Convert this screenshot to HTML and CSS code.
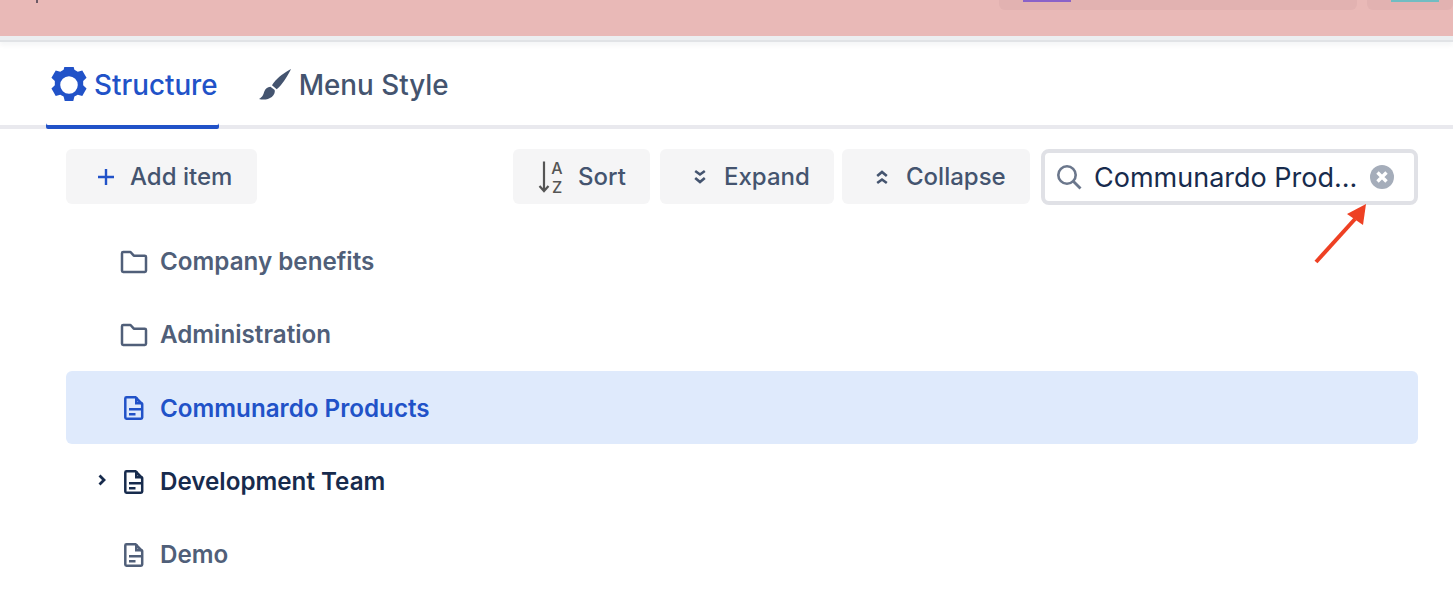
FILE: index.html
```html
<!DOCTYPE html>
<html lang="en">
  <head>
    <meta charset="UTF-8" />
    <title>Menu Editor</title>
    <link rel="stylesheet" href="styles.css">
  </head>
  <body>
    <div class="topband">
      <span class="tick"></span>
      <div class="chip"><span class="chip-bar purple"></span></div>
      <div class="chip chip-last"><span class="chip-bar teal"></span></div>
    </div>
    <div class="topshadow"></div>

    <div class="tabs">
      <div class="tab active">
        <svg class="tab-icon" viewBox="2 2 32 32" width="36" height="36">
          <path fill="#2152c8" fill-rule="evenodd" d="M14.200 0.500h7.600l1 4 3 1.700 4-1.100 3.800 6.500-3 2.900v3.800l3 2.900-3.800 6.500-4-1.100-3 1.700-1 4h-7.600l-1-4-3-1.700-4 1.100-3.800-6.500 3-2.900v-3.800l-3-2.900 3.800-6.500 4 1.100 3-1.700z M18 10.200a7.800 7.800 0 1 0 0 15.600a7.800 7.800 0 1 0 0-15.600z"/>
        </svg>
        <span>Structure</span>
      </div>
      <div class="tab">
        <svg class="tab-icon" viewBox="0 0 34 34" width="34" height="34">
          <path fill="#44546f" d="M33 1c-3 1.500-11 6.500-15.500 11.500-1.500 1.700-2.700 3.300-3.500 4.800l4.700 4c1.600-1.200 3-2.600 4.300-4.300C27 12 31.500 4.500 33 1z M12.400 18.800c-3 .2-5.300 2-6.200 5-.6 2.200-1.500 5.200-5.200 7.200 4.500 1.200 9.500.5 12.800-2 2.500-1.900 3.400-4.600 2.900-6.900z"/>
        </svg>
        <span>Menu Style</span>
      </div>
    </div>

    <div class="toolbar">
      <button class="btn btn-add">
        <svg viewBox="0 0 18 18" width="18" height="18"><path d="M9 1v16M1 9h16" stroke="#2152c8" stroke-width="2.400" fill="none"/></svg>
        Add item
      </button>
      <div class="toolbar-right">
        <button class="btn btn-sort">
          <svg viewBox="0 -6 28 46" width="28" height="46">
            <path d="M6 1.500v29M1.500 26l4.500 5 4.500-5" stroke="#555" stroke-width="2.200" fill="none"/>
            <text x="19" y="13.500" class="az">A</text>
            <text x="19" y="32.500" class="az">Z</text>
          </svg>
          Sort
        </button>
        <button class="btn btn-expand">
          <svg viewBox="0 0 12 16" width="12" height="16"><path d="M1.200 2l4.800 3.500 4.800-3.500M1.200 9l4.800 4 4.800-4" stroke="#44546f" stroke-width="2.600" fill="none"/></svg>
          Expand
        </button>
        <button class="btn btn-collapse">
          <svg viewBox="0 0 12 16" width="12" height="16"><path d="M1.200 7l4.800-4 4.800 4M1.200 14l4.800-3.500 4.800 3.500" stroke="#44546f" stroke-width="2.600" fill="none"/></svg>
          Collapse
        </button>
        <div class="search">
          <svg viewBox="0 0 26 26" width="26" height="26">
            <circle cx="11" cy="11" r="8.700" stroke="#6b778c" stroke-width="2.600" fill="none"/>
            <path d="M17.500 17.500l7 7" stroke="#6b778c" stroke-width="2.800"/>
          </svg>
          <span class="search-text">Communardo Prod...</span>
          <svg viewBox="0 0 24 24" width="24" height="24">
            <circle cx="12" cy="12" r="12" fill="#a5adba"/>
            <path d="M7.500 7.500l9 9M16.500 7.500l-9 9" stroke="#fff" stroke-width="3.400"/>
          </svg>
        </div>
      </div>
    </div>

    <ul class="tree">
      <li class="row">
        <span class="caret"></span>
        <svg class="icon-folder" viewBox="0 0 28 24" width="28" height="24"><path d="M2 3.200c0-.7.500-1.200 1.200-1.200h7.300l3.300 3.700h11c.7 0 1.200.5 1.200 1.200v13.900c0 .7-.5 1.200-1.200 1.200H3.200c-.7 0-1.200-.5-1.200-1.200z" stroke="currentColor" stroke-width="2.500" fill="none" stroke-linejoin="round"/></svg>
        <span>Company benefits</span>
      </li>
      <li class="row">
        <span class="caret"></span>
        <svg class="icon-folder" viewBox="0 0 28 24" width="28" height="24"><path d="M2 3.200c0-.7.500-1.200 1.200-1.200h7.300l3.300 3.700h11c.7 0 1.200.5 1.200 1.200v13.900c0 .7-.5 1.200-1.200 1.200H3.200c-.7 0-1.200-.5-1.200-1.200z" stroke="currentColor" stroke-width="2.500" fill="none" stroke-linejoin="round"/></svg>
        <span>Administration</span>
      </li>
      <li class="row selected">
        <span class="caret"></span>
        <svg class="icon-page" viewBox="0 0 20 24" width="20" height="24"><path d="M2.500 1.300h9l6.700 6.700v13.500c0 .7-.5 1.200-1.200 1.200H2.500c-.7 0-1.200-.5-1.200-1.200V2.500c0-.7.500-1.200 1.200-1.200z" stroke="currentColor" stroke-width="2.500" fill="none"/><path d="M11 1h2.500v5h5v2.500H11zM5 12h13v2.500H5zM5 17h6.500v2.500H5z" fill="currentColor"/></svg>
        <span>Communardo Products</span>
      </li>
      <li class="row dark">
        <span class="caret"><svg viewBox="0 0 8 12" width="8" height="12"><path d="M1.500 1.500l4.500 4.500-4.500 4.500" stroke="currentColor" stroke-width="2.800" fill="none"/></svg></span>
        <svg class="icon-page" viewBox="0 0 20 24" width="20" height="24"><path d="M2.500 1.300h9l6.700 6.700v13.500c0 .7-.5 1.200-1.200 1.200H2.500c-.7 0-1.200-.5-1.200-1.200V2.500c0-.7.500-1.200 1.200-1.200z" stroke="currentColor" stroke-width="2.500" fill="none"/><path d="M11 1h2.500v5h5v2.500H11zM5 12h13v2.500H5zM5 17h6.500v2.500H5z" fill="currentColor"/></svg>
        <span>Development Team</span>
      </li>
      <li class="row">
        <span class="caret"></span>
        <svg class="icon-page" viewBox="0 0 20 24" width="20" height="24"><path d="M2.500 1.300h9l6.700 6.700v13.500c0 .7-.5 1.200-1.200 1.200H2.500c-.7 0-1.200-.5-1.200-1.200V2.500c0-.7.500-1.200 1.200-1.200z" stroke="currentColor" stroke-width="2.500" fill="none"/><path d="M11 1h2.500v5h5v2.500H11zM5 12h13v2.500H5zM5 17h6.500v2.500H5z" fill="currentColor"/></svg>
        <span>Demo</span>
      </li>
    </ul>

    <svg class="arrow" viewBox="0 0 60 64" width="60" height="64">
      <path d="M2 62L41 19" stroke="#ee4023" stroke-width="4" fill="none"/>
      <path d="M52 4L33 14 49 25z" fill="#ee4023"/>
    </svg>
  </body>
</html>
```

FILE: styles.css
```css
body {
  margin: 0;
  height: 613px;
  overflow: hidden;
  background-color: #fff;
  font-family: Inter, "Noto Sans", sans-serif;
  color: #44546f;
}
.topband {
  position: relative;
  display: flex;
  justify-content: flex-end;
  height: 36px;
  background-color: #e9b9b7;
}
.tick {
  position: absolute;
  left: 36px;
  top: 0;
  width: 2px;
  height: 3px;
  background-color: #6d5a66;
}
.chip {
  width: 358px;
  height: 10px;
  margin-right: 10px;
  padding-left: 24px;
  box-sizing: border-box;
  background-color: #e2b2b1;
  border-radius: 0 0 6px 6px;
}
.chip-last {
  width: 86px;
  margin-right: 0;
}
.chip-bar {
  display: block;
  width: 48px;
  height: 2px;
}
.purple {
  background-color: #8a62c8;
}
.teal {
  background-color: #70bcc2;
}
.topshadow {
  height: 4px;
  background-color: #eceef0;
  border-bottom: 2px solid #e1e3e6;
  box-shadow: 0 3px 5px rgba(9, 30, 66, 0.05);
}
.tabs {
  display: flex;
  gap: 34px;
  height: 83px;
  padding-left: 46px;
  border-bottom: 4px solid #e9e9ee;
}
.tab {
  display: flex;
  align-items: center;
  gap: 7px;
  height: 83px;
  padding-left: 5px;
  padding-top: 3px;
  box-sizing: border-box;
  font-size: 27.8px;
  font-weight: 500;
}
.tab.active {
  padding-right: 1px;
  color: #2152c8;
  box-shadow: 0 4px 0 #2152c8;
  border-radius: 0 0 2px 2px;
}
.tab-icon {
  flex: none;
}
.toolbar {
  display: flex;
  justify-content: space-between;
  margin: 20px 35px 0 66px;
}
.toolbar-right {
  display: flex;
  gap: 10px;
}
.btn {
  display: flex;
  align-items: center;
  height: 55px;
  border: 0;
  border-radius: 6px;
  background-color: #f5f5f6;
  color: #44546f;
  font-family: Inter, "Noto Sans", sans-serif;
  font-size: 24px;
  font-weight: 500;
}
.btn-add {
  width: 191px;
  padding: 0 0 0 31px;
  gap: 15px;
}
.btn-sort {
  width: 137px;
  padding: 0 0 0 25px;
  gap: 12px;
}
.btn-expand {
  width: 174px;
  padding: 0 0 0 34px;
  gap: 18px;
}
.btn-collapse {
  width: 188px;
  margin-left: -2px;
  padding: 0 0 0 34px;
  gap: 18px;
}
.az {
  font-family: Inter, sans-serif;
  font-size: 16px;
  font-weight: 500;
  fill: #555;
  text-anchor: middle;
}
.search {
  display: flex;
  align-items: center;
  width: 377px;
  height: 56px;
  margin-left: 1px;
  padding: 0 20px 0 11px;
  box-sizing: border-box;
  border: 4px solid #e0e1e6;
  border-radius: 8px;
  gap: 12px;
}
.search-text {
  flex: 1;
  white-space: nowrap;
  font-size: 27px;
  color: #172b4d;
}
.tree {
  list-style: none;
  margin: 19px 35px 0 66px;
  padding: 0;
}
.row {
  display: flex;
  align-items: center;
  height: 73.3px;
  padding-top: 2px;
  box-sizing: border-box;
  border-radius: 6px;
  font-size: 24.2px;
  font-weight: 600;
  color: #505f79;
}
.caret {
  display: flex;
  justify-content: center;
  flex: none;
  width: 18px;
  margin-left: 27px;
  margin-right: 10px;
  margin-top: -4px;
}
.icon-folder {
  flex: none;
  margin-right: 12px;
  margin-left: -1px;
}
.icon-page {
  flex: none;
  margin-left: 3px;
  margin-right: 16px;
}
.selected {
  background-color: #dfeafc;
  color: #2152c8;
}
.dark {
  color: #172b4d;
}
.arrow {
  position: absolute;
  left: 1314px;
  top: 200px;
}
```
